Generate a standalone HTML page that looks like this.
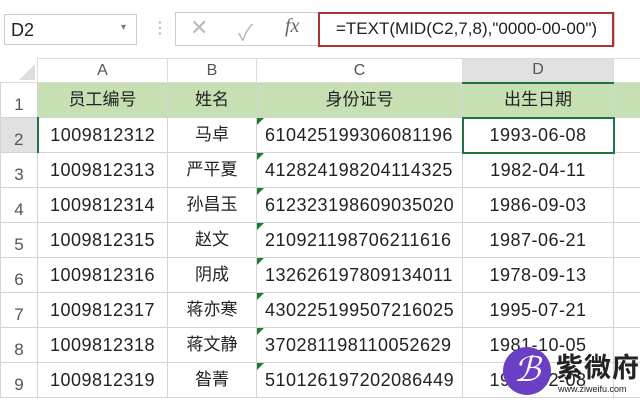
<!DOCTYPE html><html><head><meta charset="utf-8"><style>
body{margin:0;width:640px;height:400px;overflow:hidden;background:#fff;font-family:"Liberation Sans","Noto Sans CJK SC",sans-serif;position:relative}
.a{position:absolute;box-sizing:border-box}
table{position:absolute;left:0;top:58px;border-collapse:collapse;table-layout:fixed;width:653px}
tr{height:35px}
tr.h{height:24px}
td{border:1px solid #d4d4d4;text-align:center;font-size:18px;letter-spacing:0.5px;line-height:20px;color:#222;padding:0;position:relative;white-space:nowrap;overflow:hidden}
tr.h td{background:#fff;color:#555;font-size:16px;letter-spacing:0;border-color:#dcdcdc}
td.rh{color:#555;font-size:17px;letter-spacing:0;vertical-align:bottom;padding-bottom:2px;background:#fff}
tr.g td.d{background:#c6e0b4;font-size:17px;letter-spacing:0}
td.k{font-size:17px;letter-spacing:0}
td.c{text-align:left;padding-left:8px}
td.c::before{content:"";position:absolute;left:0;top:0;border-top:7px solid #1e7a2e;border-right:7px solid transparent}
</style></head><body>
<div class="a" style="left:4px;top:14px;width:133px;height:31px;border:1px solid #ccc;font-size:18px;padding:5px 0 0 6px;color:#222">D2<span style="position:absolute;right:10px;top:7px;font-size:10px;color:#777">▾</span></div>
<div class="a" style="left:152px;top:18px;color:#aaa;font-size:16px">⋮</div>
<div class="a" style="left:175px;top:12px;width:440px;height:34px;border:1px solid #ccc"></div>
<div class="a" style="left:190px;top:15px;color:#bbb;font-size:22px">✕</div>
<div class="a" style="left:238px;top:15px;color:#bbb;font-size:22px">✓</div>
<div class="a" style="left:285px;top:15px;color:#666;font-size:20px;font-style:italic;font-family:'Liberation Serif',serif">fx</div>
<div class="a" style="left:318px;top:12px;width:296px;height:35px;border:2px solid #a33;font-size:17px;color:#222;padding:5px 0 0 16px">=TEXT(MID(C2,7,8),"0000-00-00")</div>
<table>
<colgroup><col style="width:37px"><col style="width:130px"><col style="width:89px"><col style="width:206px"><col style="width:151px"><col style="width:40px"></colgroup>
<tr class="h"><td style="border-left:0;border-top:0"><div style="position:absolute;right:2px;bottom:2px;width:0;height:0;border-left:16px solid transparent;border-bottom:16px solid #ddd"></div></td><td>A</td><td>B</td><td>C</td><td style="background:#e1e1e1;border-bottom:2px solid #217346">D</td><td></td></tr>
<tr class="g"><td class="rh">1</td><td class="d">员工编号</td><td class="d">姓名</td><td class="d">身份证号</td><td class="d">出生日期</td><td class="d"></td></tr>
<tr><td class="rh" style="background:#e1e1e1;border-right:2px solid #217346">2</td><td>1009812312</td><td class="k">马卓</td><td class="c">610425199306081196</td><td style="border:2px solid #217346">1993-06-08</td><td></td></tr>
<tr><td class="rh">3</td><td>1009812313</td><td class="k">严平夏</td><td class="c">412824198204114325</td><td>1982-04-11</td><td></td></tr>
<tr><td class="rh">4</td><td>1009812314</td><td class="k">孙昌玉</td><td class="c">612323198609035020</td><td>1986-09-03</td><td></td></tr>
<tr><td class="rh">5</td><td>1009812315</td><td class="k">赵文</td><td class="c">210921198706211616</td><td>1987-06-21</td><td></td></tr>
<tr><td class="rh">6</td><td>1009812316</td><td class="k">阴成</td><td class="c">132626197809134011</td><td>1978-09-13</td><td></td></tr>
<tr><td class="rh">7</td><td>1009812317</td><td class="k">蒋亦寒</td><td class="c">430225199507216025</td><td>1995-07-21</td><td></td></tr>
<tr><td class="rh">8</td><td>1009812318</td><td class="k">蒋文静</td><td class="c">370281198110052629</td><td>1981-10-05</td><td></td></tr>
<tr><td class="rh">9</td><td>1009812319</td><td class="k">昝菁</td><td class="c">510126197202086449</td><td>1972-02-08</td><td></td></tr>
</table>
<div class="a" style="left:503px;top:347px;width:48px;height:48px;border-radius:50%;background:#6b3fc4;color:#fff;font-size:34px;text-align:center;line-height:46px;font-style:italic">ℬ</div>
<div class="a" style="left:556px;top:346px;font-size:27px;font-weight:bold;color:#222;letter-spacing:1px">紫微府</div>
<div class="a" style="left:558px;top:384px;font-size:9px;color:#222">www.ziweifu.com</div>
</body></html>
